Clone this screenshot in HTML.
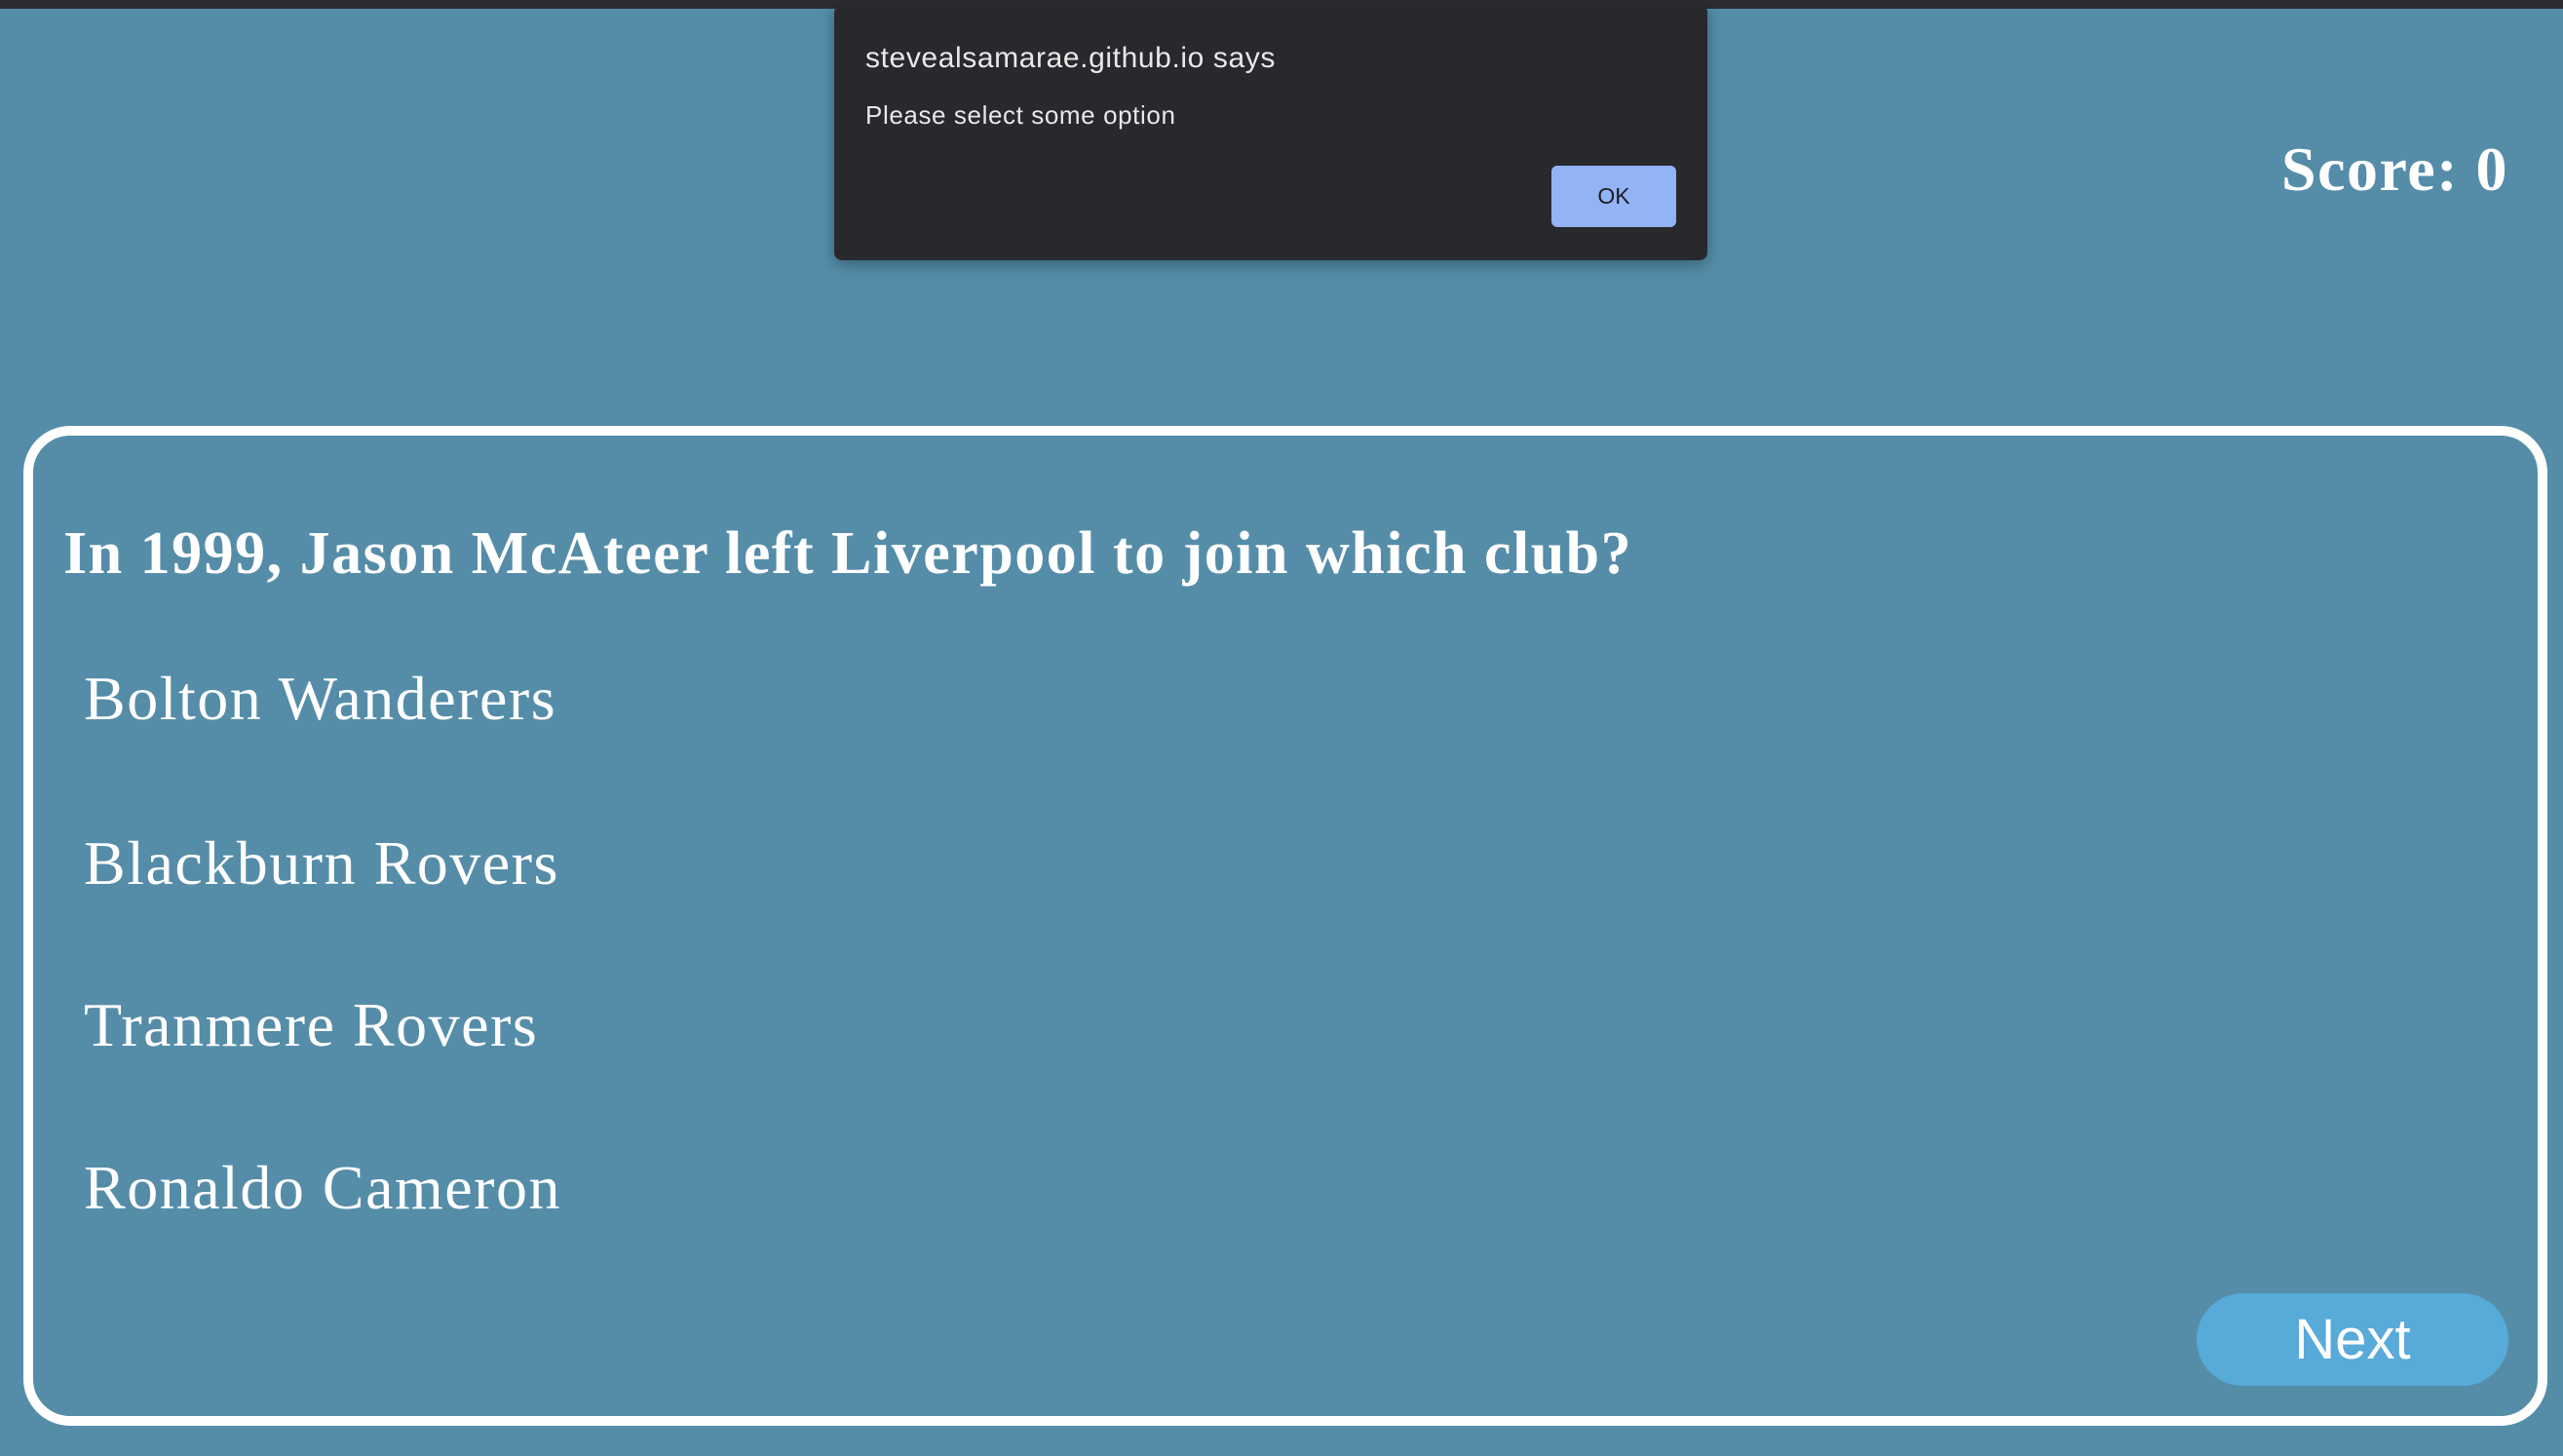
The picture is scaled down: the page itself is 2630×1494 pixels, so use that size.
<!DOCTYPE html>
<html><head><meta charset="utf-8"><style>
html,body{margin:0;padding:0}
body{width:2630px;height:1494px;background:#558da9;position:relative;overflow:hidden;font-family:"Liberation Serif",serif;color:#fff}
.topbar{position:absolute;left:0;top:0;width:2630px;height:9px;background:#2c2d31}
.score{position:absolute;right:56px;top:142px;font-size:64px;font-weight:bold;line-height:1;letter-spacing:1.5px}
.card{position:absolute;left:24px;top:437px;width:2570px;height:1006px;border:10px solid #fff;border-radius:48px}
.q{position:absolute;left:65px;top:537px;font-size:62px;font-weight:bold;line-height:1;white-space:nowrap;letter-spacing:1.5px}
.opt{position:absolute;left:86px;font-size:64px;line-height:1;white-space:nowrap;letter-spacing:1.5px}
.next{position:absolute;left:2254px;top:1327px;width:320px;height:95px;border-radius:48px;background:#58aad8;font-family:"Liberation Sans",sans-serif;font-size:58px;text-align:center;line-height:95px}
.dlg{position:absolute;left:856px;top:5px;width:896px;height:262px;background:#28292d;border-radius:8px;box-shadow:0 4px 16px rgba(0,0,0,.35);font-family:"Liberation Sans",sans-serif}
.t1{position:absolute;left:32px;top:38px;font-size:30px;color:#e8e8e8;letter-spacing:0.6px}
.t2{position:absolute;left:32px;top:98px;font-size:26px;color:#e8e8e8;letter-spacing:0.6px}
.ok{position:absolute;left:736px;top:165px;width:128px;height:63px;background:#93b4f4;border-radius:6px;color:#1b1c1f;font-size:23px;text-align:center;line-height:63px}
</style></head><body>
<div class="topbar"></div>
<div class="score">Score: 0</div>
<div class="card"></div>
<div class="q">In 1999, Jason McAteer left Liverpool to join which club?</div>
<div class="opt" style="top:685px">Bolton Wanderers</div>
<div class="opt" style="top:854px">Blackburn Rovers</div>
<div class="opt" style="top:1020px">Tranmere Rovers</div>
<div class="opt" style="top:1187px">Ronaldo Cameron</div>
<div class="next">Next</div>
<div class="dlg">
<div class="t1">stevealsamarae.github.io says</div>
<div class="t2">Please select some option</div>
<div class="ok">OK</div>
</div>
</body></html>
